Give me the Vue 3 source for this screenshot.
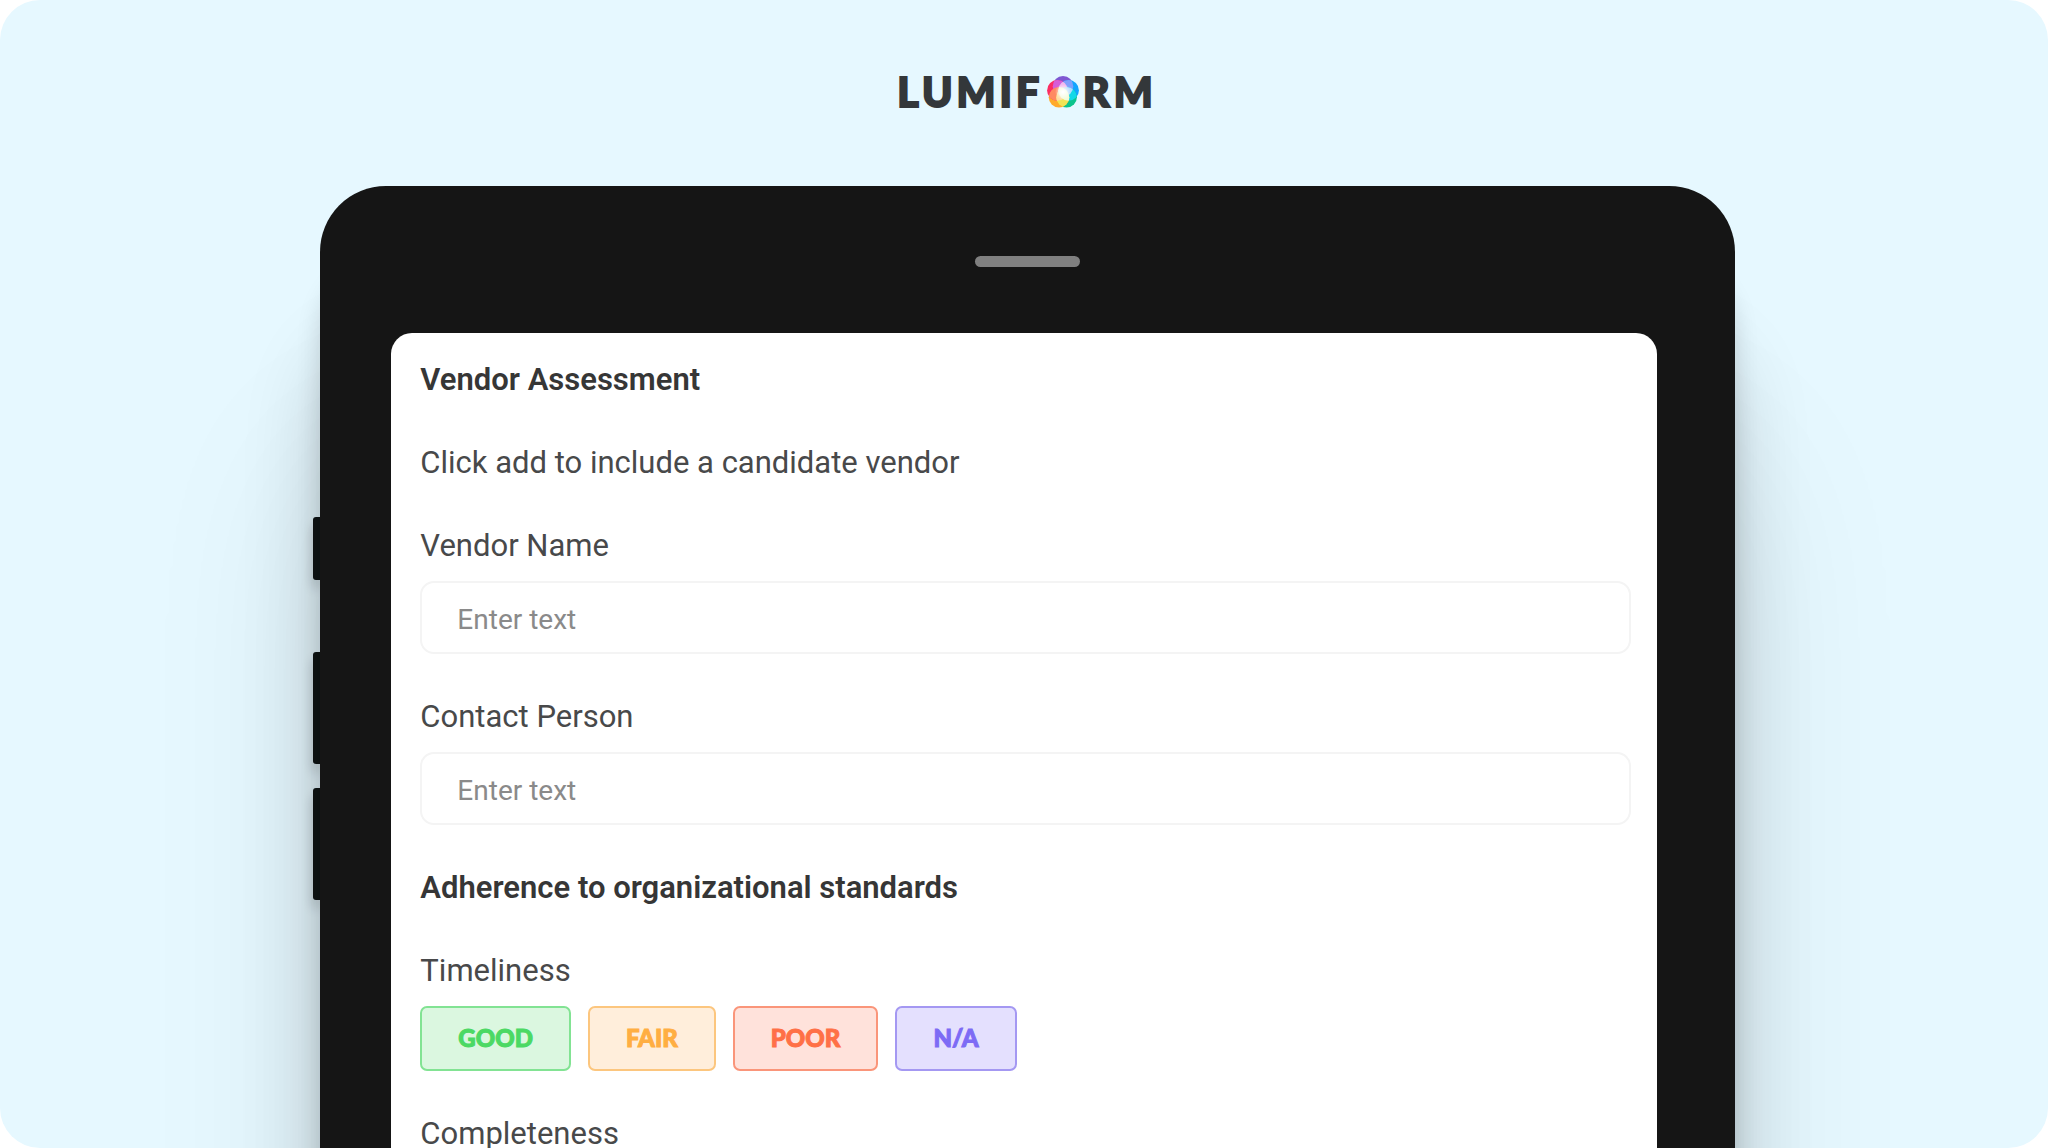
<script setup>
import { ref } from 'vue'

const fields = ref([
  { id: 'vendor-name', label: 'Vendor Name', value: '' },
  { id: 'contact-person', label: 'Contact Person', value: '' },
])

const ratings = [
  { label: 'GOOD', tone: 'good' },
  { label: 'FAIR', tone: 'fair' },
  { label: 'POOR', tone: 'poor' },
  { label: 'N/A', tone: 'na' },
]
</script>

<template>
  <main class="canvas">
    <header class="logo">
      <span>LUMIF</span>
      <svg class="ball" viewBox="0 0 32 32" aria-hidden="true">
        <circle cx="16" cy="10.4" r="10.3" fill="#7e57d2" />
        <circle cx="21.6" cy="14.4" r="10.3" fill="#12a5ff" />
        <circle cx="19.6" cy="21.2" r="10.3" fill="#0cc48c" />
        <circle cx="12" cy="21.2" r="10.3" fill="#ffaa2b" />
        <circle cx="10.4" cy="14.4" r="10.3" fill="#fb2d63" />
        <g clip-path="url(#c-top)">
          <circle cx="10.4" cy="14.4" r="10.3" fill="#d65cd8" />
          <circle cx="21.6" cy="14.4" r="10.3" fill="#7fa0fc" />
        </g>
        <g clip-path="url(#c-left)">
          <circle cx="12" cy="21.2" r="10.3" fill="#ff8a62" />
        </g>
        <g clip-path="url(#c-right)">
          <circle cx="19.6" cy="21.2" r="10.3" fill="#12d8e8" />
        </g>
        <g clip-path="url(#c-gold)">
          <circle cx="19.6" cy="21.2" r="10.3" fill="#f0e455" />
        </g>
        <g clip-path="url(#c-left)">
          <circle cx="21.6" cy="14.4" r="10.3" fill="#f3b8ee" />
          <circle cx="19.6" cy="21.2" r="10.3" fill="#ffdca0" />
        </g>
        <g clip-path="url(#c-right)">
          <g clip-path="url(#c-top)">
            <circle cx="19.6" cy="21.2" r="10.3" fill="#b4dcff" />
          </g>
          <g clip-path="url(#c-gold)">
            <circle cx="16" cy="16" r="16" fill="#f1fbd8" />
          </g>
        </g>
        <circle cx="16" cy="16" r="8" fill="url(#glow)" />
        <defs>
          <clipPath id="c-top"><circle cx="16" cy="10.4" r="10.3" /></clipPath>
          <clipPath id="c-left"><circle cx="10.4" cy="14.4" r="10.3" /></clipPath>
          <clipPath id="c-right"><circle cx="21.6" cy="14.4" r="10.3" /></clipPath>
          <clipPath id="c-gold"><circle cx="12" cy="21.2" r="10.3" /></clipPath>
          <radialGradient id="glow">
            <stop offset="0.1" stop-color="#fff" />
            <stop offset="1" stop-color="#fff" stop-opacity="0" />
          </radialGradient>
        </defs>
      </svg>
      <span>RM</span>
    </header>

    <div class="device">
      <div class="keys">
        <i class="key key-short"></i>
        <i class="key"></i>
        <i class="key"></i>
      </div>
      <div class="body">
        <div class="speaker"></div>
        <form class="screen" @submit.prevent>
          <h1 class="heading">Vendor Assessment</h1>
          <p class="line">Click add to include a candidate vendor</p>
          <div v-for="f in fields" :key="f.id" class="field">
            <label class="line" :for="f.id">{{ f.label }}</label>
            <input :id="f.id" v-model="f.value" class="entry" type="text" placeholder="Enter text" />
          </div>
          <h2 class="heading">Adherence to organizational standards</h2>
          <div class="field" role="group" aria-labelledby="timeliness">
            <p id="timeliness" class="line">Timeliness</p>
            <div class="ratings">
              <button v-for="r in ratings" :key="r.tone" type="button" class="rating" :class="r.tone">
                {{ r.label }}
              </button>
            </div>
          </div>
          <p class="line">Completeness</p>
        </form>
      </div>
    </div>
  </main>
</template>

<style>
body {
  margin: 0;
  background: #fff;
}
</style>

<style scoped>
.canvas {
  height: 100vh;
  overflow: hidden;
  border-radius: 40px;
  background: #e6f8ff;
  display: flex;
  flex-direction: column;
  align-items: center;
  font-family: Roboto, "Liberation Sans", sans-serif;
  color: #48494a;
}

.logo {
  flex: none;
  display: flex;
  align-items: center;
  gap: 4px;
  padding: 65px 0 67px 6px;
  font-family: Lato, sans-serif;
  font-weight: 900;
  font-size: 41px;
  line-height: 54px;
  letter-spacing: 4px;
  color: #33373a;
  -webkit-text-stroke: 2px #33373a;
}

.ball {
  width: 32px;
  height: 32px;
}

.device {
  flex: none;
  width: 69.4%;
  display: flex;
}

.keys {
  flex: none;
  width: 7px;
  padding-top: 331px;
  display: flex;
  flex-direction: column;
  gap: 24px;
}

.key {
  height: 112px;
  border-radius: 3px 0 0 3px;
  background: #0f1516;
  box-shadow: 0 8px 12px rgba(0, 0, 0, 0.2);
}

.key-short {
  height: 63px;
  margin-bottom: 48px;
}

.body {
  position: relative;
  flex: 1;
  padding: 70px 0;
  border-radius: 66px;
  background: #151515;
  box-shadow:
    0 80px 24px rgba(0, 0, 0, 0.14),
    0 160px 80px rgba(0, 0, 0, 0.16),
    0 270px 180px rgba(0, 0, 0, 0.1);
}

.speaker {
  width: 105px;
  height: 11px;
  margin: 0 auto 66px;
  border-radius: 6px;
  background: #808080;
}

.screen {
  margin: 0 78px 0 71px;
  padding: 27px 26px 40px 29px;
  border-radius: 21px;
  background: #fff;
  display: flex;
  flex-direction: column;
  gap: 43px;
}

.heading,
.line {
  margin: 0;
  font-size: 31px;
  line-height: 40px;
  font-weight: 400;
}

.heading {
  font-weight: 600;
  color: #363636;
}

.field {
  display: flex;
  flex-direction: column;
  gap: 15px;
}

.entry {
  box-sizing: border-box;
  width: 100%;
  height: 73px;
  padding: 4px 35px 0;
  border: 2px solid #f4f4f4;
  border-radius: 14px;
  background: #fff;
  font: inherit;
  font-size: 28px;
  color: #48494a;
}

.entry::placeholder {
  color: #8a8a8a;
  opacity: 1;
}

.ratings {
  display: flex;
  gap: 17px;
}

.rating {
  height: 65px;
  padding: 0 36px 2px;
  border: 2px solid;
  border-radius: 7px;
  font-family: Lato, sans-serif;
  font-weight: 900;
  font-size: 24px;
  -webkit-text-stroke: 1px currentColor;
}

.good {
  color: #4cd964;
  background: #dbf7e0;
  border-color: #82e393;
}

.fair {
  color: #ffae42;
  background: #ffeedb;
  border-color: #fcc67e;
}

.poor {
  color: #ff7046;
  background: #ffe2db;
  border-color: #fa957a;
}

.na {
  color: #7d6bf5;
  background: #e4e0fe;
  border-color: #a498f2;
}
</style>
